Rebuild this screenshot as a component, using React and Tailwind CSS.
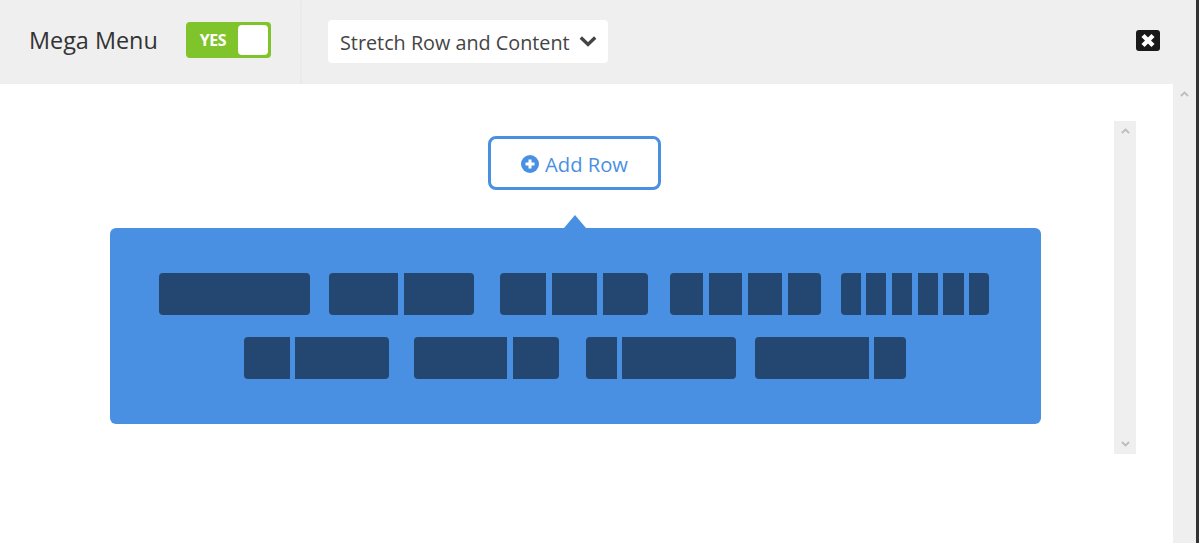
const font = { fontFamily: '"Open Sans", "Noto Sans", sans-serif' };

const Chevron = ({ className, up, sw = 2 }) => (
  <svg viewBox="0 0 10 6" className={className} fill="none" stroke="currentColor" strokeWidth={sw}>
    <path d={up ? "M1 5.2 L5 1.4 L9 5.2" : "M1 .8 L5 4.6 L9 .8"} />
  </svg>
);

const Block = ({ segs, className }) => (
  <div className={"flex h-[42px] overflow-hidden rounded-[4px] " + className}>
    {segs.map((s, i) => (
      <div key={i} className={"bg-[#244772] h-full " + s} />
    ))}
  </div>
);

export default function App() {
  return (
    <div className="flex h-[543px] w-[1199px] overflow-hidden bg-white" style={font}>
      <div className="flex flex-1 flex-col">
        <header className="flex h-[84px] items-center bg-[#efefef]">
          <div className="flex h-[83px] w-[302px] items-center border-r-2 border-[#eaeaea] pl-[29px]">
            <span className="mb-[2px] whitespace-nowrap text-[23.4px] leading-none text-[#333333]">Mega Menu</span>
            <div className="mb-[5px] ml-[28px] flex h-[36px] w-[85px] items-center justify-between rounded-[4px] bg-[#7fc42a] pl-[14px] pr-[3px]">
              <span className="text-[16px] font-bold leading-none tracking-[-0.5px] text-white">YES</span>
              <span className="h-[30px] w-[30px] rounded-[4px] bg-white" />
            </div>
          </div>
          <div className="mb-[1px] ml-[26px] flex h-[43px] w-[280px] items-center rounded-[4px] bg-white pl-[12px]">
            <span className="whitespace-nowrap pt-[3px] text-[19.8px] leading-none text-[#444444]">Stretch Row and Content</span>
            <Chevron sw={1.9} className="ml-[9px] h-[11px] w-[18px] text-[#444444]" />
          </div>
          <svg viewBox="0 0 24 21" className="mb-[4px] ml-[528px] h-[21px] w-[24px]">
            <rect width="24" height="21" rx="3" fill="#1a1a1a" />
            <path d="M7 5.5 L17 15.5 M17 5.5 L7 15.5" stroke="#fff" strokeWidth="4.4" />
          </svg>
        </header>
        <div className="flex flex-1">
          <div className="flex w-[1173px] pl-[110px]">
            <div className="flex w-[931px] flex-col items-center pt-[52px]">
              <button className="mr-[2px] flex h-[54px] w-[173px] items-center justify-center gap-[6px] rounded-[8px] border-[3px] border-[#4a90e2] text-[#4a90e2]">
                <svg viewBox="0 0 18 18" className="mt-[2px] h-[18px] w-[18px]">
                  <circle cx="9" cy="9" r="9" fill="#4a90e2" />
                  <path d="M9 4.5 V13.5 M4.5 9 H13.5" stroke="#fff" strokeWidth="3" />
                </svg>
                <span className="pt-[3px] text-[20.2px] leading-none">Add Row</span>
              </button>
              <div className="relative mt-[38px] flex h-[196px] w-[931px] flex-col gap-[22px] rounded-[6px] bg-[#4a90e2] pt-[45px]">
                <svg viewBox="0 0 22 13" className="absolute left-[454px] top-[-13px] h-[13px] w-[22px]">
                  <path d="M0 13 L11 0 L22 13 Z" fill="#4a90e2" />
                </svg>
                <div className="flex pl-[49px]">
                  <Block className="" segs={["w-[151px]"]} />
                  <Block className="ml-[19px] gap-[6px]" segs={["w-[69px]", "w-[70px]"]} />
                  <Block className="ml-[26px] gap-[6px]" segs={["w-[46px]", "w-[45px]", "w-[45px]"]} />
                  <Block className="ml-[22px] gap-[6px]" segs={["w-[33px]", "w-[33px]", "w-[34px]", "w-[33px]"]} />
                  <Block className="ml-[20px] gap-[5.4px]" segs={["w-[19.5px]", "w-[20.5px]", "w-[20.5px]", "w-[20px]", "w-[20.5px]", "w-[20.5px]"]} />
                </div>
                <div className="flex pl-[134px]">
                  <Block className="gap-[5px]" segs={["w-[46px]", "w-[94px]"]} />
                  <Block className="ml-[25px] gap-[6px]" segs={["w-[93px]", "w-[46px]"]} />
                  <Block className="ml-[27px] gap-[5px]" segs={["w-[31px]", "w-[114px]"]} />
                  <Block className="ml-[19px] gap-[5px]" segs={["w-[114px]", "w-[32px]"]} />
                </div>
              </div>
            </div>
            <div className="ml-[73px] mt-[37px] flex h-[333px] w-[22px] flex-col items-center justify-between bg-[#efefef] py-[7px] text-[#bdbdbd]">
              <Chevron up className="h-[6px] w-[9px]" />
              <Chevron className="h-[6px] w-[9px]" />
            </div>
          </div>
          <div className="flex flex-1 justify-center bg-[#efefef] pt-[7px] text-[#bdbdbd]">
            <Chevron up className="h-[6px] w-[9px]" />
          </div>
        </div>
      </div>
      <div className="w-[3px] bg-[#333333]" />
    </div>
  );
}
